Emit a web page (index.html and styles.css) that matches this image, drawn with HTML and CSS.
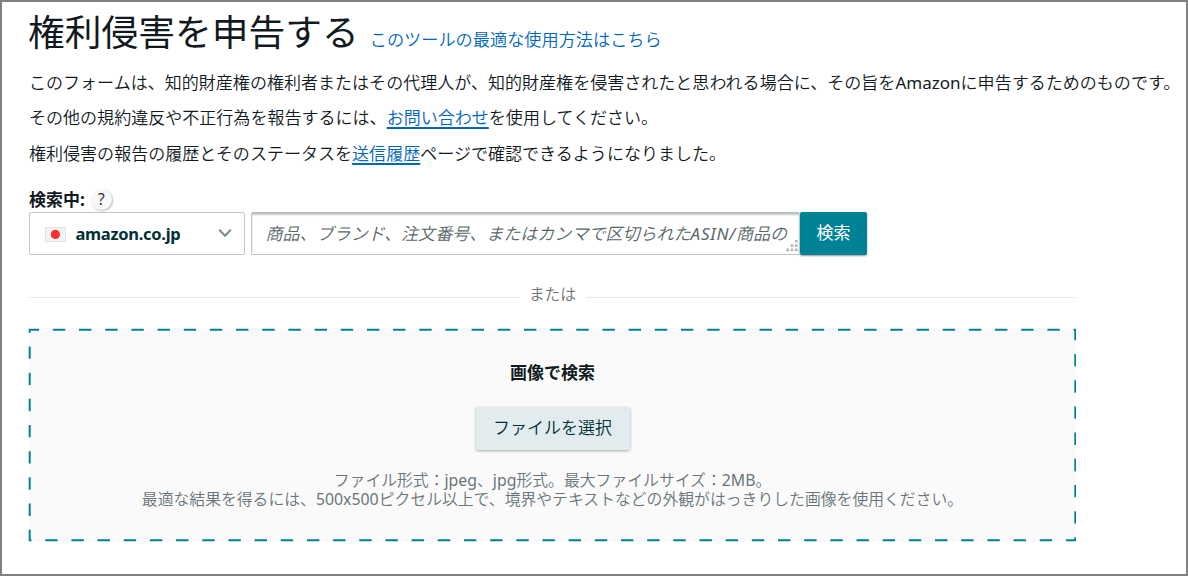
FILE: index.html
```html
<!DOCTYPE html>
<html lang="ja">
<head>
<meta charset="utf-8">
<title>権利侵害を申告する</title>
<link rel="stylesheet" href="styles.css">
</head>
<body>
<main class="page">
  <header class="heading">
    <h1 class="title">権利侵害を申告する</h1>
    <a class="guide">このツールの最適な使用方法はこちら</a>
  </header>
  <section class="intro">
    <p>このフォームは、知的財産権の権利者またはその代理人が、知的財産権を侵害されたと思われる場合に、その旨を<span class="brand">Amazon</span>に申告するためのものです。</p>
    <p>その他の規約違反や不正行為を報告するには、<a class="link">お問い合わせ</a>を使用してください。</p>
    <p>権利侵害の報告の履歴とそのステータスを<a class="link">送信履歴</a>ページで確認できるようになりました。</p>
  </section>
  <div class="label-row"><span class="label">検索中:</span><span class="help">?</span></div>
  <div class="search">
    <div class="select">
      <svg class="flag" width="21" height="15" viewBox="0 0 21 15"><rect x=".5" y=".5" width="20" height="14" fill="#f4f4f4" stroke="#e2e2e2"/><circle cx="10.4" cy="7.4" r="4.6" fill="#fb3030"/></svg>
      <span class="store">amazon.co.jp</span>
      <svg class="chevron" width="14" height="10" viewBox="0 0 14 10"><path d="M1.2 1.800 7 7.700l5.800-5.900" fill="none" stroke="#7d8f92" stroke-width="2.200"/></svg>
    </div>
    <div class="query">
      <span class="placeholder">商品、ブランド、注文番号、またはカンマで区切られた<span class="asin">ASIN/</span>商品の</span>
      <svg class="grip" width="12" height="12" viewBox="0 0 12 12" fill="#b5b5b5"><path d="M9 0h2.600v2.600H9zM4.700 4.300h2.600v2.600H4.700zM9 4.300h2.600v2.600H9zM.4 8.600H3v2.600H.4zM4.700 8.600h2.600v2.600H4.700zM9 8.600h2.600v2.600H9z"/></svg>
    </div>
    <button class="submit">検索</button>
  </div>
  <div class="divider"><span>または</span></div>
  <section class="drop">
    <svg class="dashes" width="1048" height="214" viewBox="0 0 1048 214"><rect x="1.700" y="1.700" width="1045.600" height="210.600" fill="none" stroke="#008296" stroke-width="2" stroke-dasharray="12.4 13.771" stroke-dashoffset="3"/></svg>
    <h2 class="drop-title">画像で検索</h2>
    <button class="choose">ファイルを選択</button>
    <p class="hint">ファイル形式：<span>jpeg</span>、<span>jpg</span>形式。最大ファイルサイズ：<span>2MB</span>。</p>
    <p class="hint">最適な結果を得るには、<span>500x500</span>ピクセル以上で、境界やテキストなどの外観がはっきりした画像を使用ください。</p>
  </section>
</main>
</body>
</html>
```
FILE: styles.css
```css
* { box-sizing: border-box; }
body { margin: 0; font-family: "Noto Sans", "Noto Sans CJK JP", sans-serif; color: #111a1e; }
h1, h2, p { margin: 0; font-weight: 350; }
button { border: 0; padding: 0; font-family: inherit; font-weight: 400; }
.page { width: 1188px; height: 576px; border: 2px solid #808080; padding: 3px 0 0 27px; background: #fff; overflow: hidden; }
.heading { display: flex; align-items: baseline; gap: 11px; height: 60px; margin-left: -1px; white-space: nowrap; }
.title { font-size: 36.750px; line-height: 54px; font-weight: 400; }
.guide { font-size: 17.180px; font-weight: 350; color: #0066c0; }
.intro { font-size: 17.050px; font-weight: 350; white-space: nowrap; }
.intro p { height: 35.300px; line-height: 35.300px; }
.link { color: #0066c0; text-decoration: underline; text-underline-offset: 3px; text-decoration-thickness: 1.500px; }
.brand { font-weight: 400; }
.label-row { display: flex; align-items: center; gap: 6px; height: 23px; margin-top: 17px; }
.label { font-size: 17px; font-weight: 700; line-height: 23px; }
.help { width: 21px; height: 21px; border-radius: 50%; background: #f8f8f8; box-shadow: 1px 1px 2px #bbb; text-align: center; font-size: 15.500px; line-height: 21px; color: #333; }
.search { display: flex; height: 44px; margin-top: 1px; margin-left: -.5px; }
.select { display: flex; align-items: center; width: 216px; height: 43px; margin-right: 6px; padding: 0 12px 0 15px; border: 1px solid #bcc7c9; border-radius: 2px; }
.flag { margin-top: 3px; }
.store { margin-left: 10px; font-size: 16.500px; letter-spacing: -.3px; font-weight: 700; color: #002f36; }
.chevron { margin-left: auto; }
.query { position: relative; width: 549.500px; height: 43px; padding-left: 14px; border: 1px solid #bcc7c9; border-top: 2px solid #b9c1c1; border-radius: 2px; box-shadow: inset 0 1px 2px #ccc; overflow: hidden; white-space: nowrap; }
.placeholder { font-size: 17.040px; line-height: 39px; font-style: italic; font-weight: 350; color: #596769; }
.asin { font-weight: 400; letter-spacing: .7px; }
.grip { position: absolute; right: 1px; bottom: 2px; }
.submit { width: 67px; height: 43px; padding-bottom: 3px; border-radius: 2px; background: #008296; color: #fff; font-size: 17px; box-shadow: 0 1px 2px #999; }
.divider { display: flex; align-items: center; gap: 10px; width: 1047px; height: 24px; margin-top: 26px; font-size: 15.750px; font-weight: 350; color: #6b7375; }
.divider::before, .divider::after { content: ""; flex: 1; height: 1px; margin-top: 7px; background: #e8e8e8; }
.drop { position: relative; width: 1047px; height: 213px; margin-top: 23px; padding-top: 32px; background: #fafafa; display: flex; flex-direction: column; align-items: center; }
.dashes { position: absolute; left: -1px; top: -1px; }
.drop-title { font-size: 17px; line-height: 24px; font-weight: 700; }
.choose { width: 154px; height: 43px; margin: 22px 0 21px; padding-bottom: 3px; border-radius: 2px; background: #e2ecee; color: #002f36; font-size: 17px; font-weight: 350; box-shadow: 0 1px 3px #aaa; }
.hint { font-size: 15.830px; line-height: 19.500px; font-weight: 350; color: #69757a; white-space: nowrap; }
.hint span { font-weight: 400; }
```
